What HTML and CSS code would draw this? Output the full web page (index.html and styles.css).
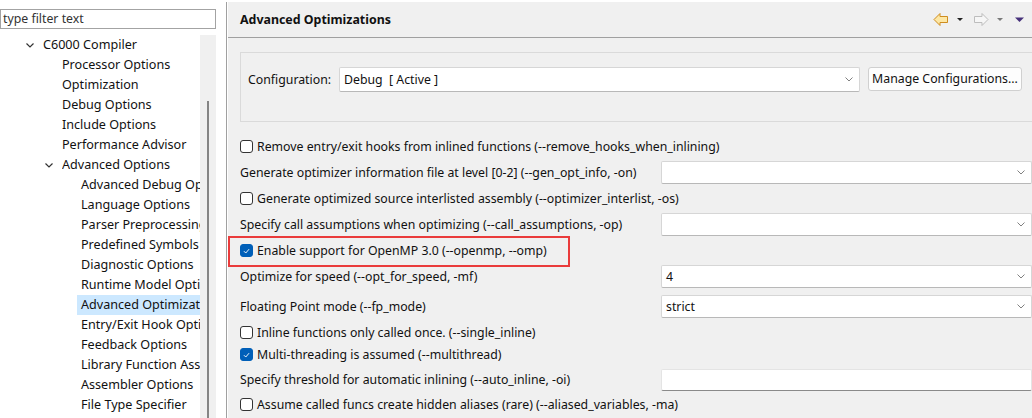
FILE: index.html
```html
<!DOCTYPE html>
<html>
<head>
<meta charset="utf-8">
<link rel="stylesheet" href="styles.css">
</head>
<body>
<div class="app">
  <div class="left">
    <div class="filter">type filter text</div>
    <div class="tree">
      <div class="tree-list">
        <div class="item l1"><svg class="chev" width="10" height="20" viewBox="0 0 10 20"><path d="M1.5 8.5 L5 12 L8.5 8.5" fill="none" stroke="#333" stroke-width="1.2"/></svg><span class="label">C6000 Compiler</span></div>
        <div class="item l2"><span class="label">Processor Options</span></div>
        <div class="item l2"><span class="label">Optimization</span></div>
        <div class="item l2"><span class="label">Debug Options</span></div>
        <div class="item l2"><span class="label">Include Options</span></div>
        <div class="item l2"><span class="label">Performance Advisor</span></div>
        <div class="item l2x"><svg class="chev" width="10" height="20" viewBox="0 0 10 20"><path d="M1.5 8.5 L5 12 L8.5 8.5" fill="none" stroke="#333" stroke-width="1.2"/></svg><span class="label">Advanced Options</span></div>
        <div class="item l3"><span class="label">Advanced Debug Options</span></div>
        <div class="item l3"><span class="label">Language Options</span></div>
        <div class="item l3"><span class="label">Parser Preprocessing Options</span></div>
        <div class="item l3"><span class="label">Predefined Symbols</span></div>
        <div class="item l3"><span class="label">Diagnostic Options</span></div>
        <div class="item l3"><span class="label">Runtime Model Options</span></div>
        <div class="item l3 selected"><span class="label">Advanced Optimizations</span></div>
        <div class="item l3"><span class="label">Entry/Exit Hook Options</span></div>
        <div class="item l3"><span class="label">Feedback Options</span></div>
        <div class="item l3"><span class="label">Library Function Assumptions</span></div>
        <div class="item l3"><span class="label">Assembler Options</span></div>
        <div class="item l3"><span class="label">File Type Specifier</span></div>
      </div>
      <div class="vscroll"><div class="thumb"></div></div>
    </div>
  </div>
  <div class="divider"></div>
  <div class="right">
    <div class="header">
      <div class="title">Advanced Optimizations</div>
      <svg class="nav" width="98" height="35" viewBox="0 0 98 35">
        <polygon points="4,17.5 10,11.5 10,14.5 17.5,14.5 17.5,20.5 10,20.5 10,23.5" fill="#fde7a4" stroke="#cf8d1f" stroke-width="1" stroke-linejoin="round"/>
        <polygon points="27,16 33,16 30,19" fill="#222"/>
        <polygon points="58,17.5 52,11.5 52,14.5 44.5,14.5 44.5,20.5 52,20.5 52,23.5" fill="#f6f6f6" stroke="#bdbdbd" stroke-width="1" stroke-linejoin="round"/>
        <polygon points="67,16 73,16 70,19" fill="#7a7a7a"/>
        <polygon points="85,15.5 94,15.5 89.5,20" fill="#46307a"/>
      </svg>
    </div>
    <div class="content">
      <div class="group">
        <span class="config-label">Configuration:</span>
        <div class="combo config-combo"><span class="combo-text">Debug&nbsp;&nbsp;[ Active ]</span><svg class="combo-chev" width="8" height="5" viewBox="0 0 8 5"><path d="M0.5 0.5 L4 4 L7.5 0.5" fill="none" stroke="#808080" stroke-width="1"/></svg></div>
        <div class="button">Manage Configurations...</div>
      </div>
      <div class="options">
        <div class="row check-row"><span class="cb"></span><span>Remove entry/exit hooks from inlined functions (--remove_hooks_when_inlining)</span></div>
        <div class="row combo-row"><span class="opt-label">Generate optimizer information file at level [0-2] (--gen_opt_info, -on)</span><div class="combo opt-combo"><span class="combo-text"></span><svg class="combo-chev" width="8" height="5" viewBox="0 0 8 5"><path d="M0.5 0.5 L4 4 L7.5 0.5" fill="none" stroke="#808080" stroke-width="1"/></svg></div></div>
        <div class="row check-row"><span class="cb"></span><span>Generate optimized source interlisted assembly (--optimizer_interlist, -os)</span></div>
        <div class="row combo-row"><span class="opt-label">Specify call assumptions when optimizing (--call_assumptions, -op)</span><div class="combo opt-combo"><span class="combo-text"></span><svg class="combo-chev" width="8" height="5" viewBox="0 0 8 5"><path d="M0.5 0.5 L4 4 L7.5 0.5" fill="none" stroke="#808080" stroke-width="1"/></svg></div></div>
        <div class="row check-row highlighted"><span class="cb checked"><svg width="12" height="12" viewBox="0 0 12 12"><path d="M3.2 6.2 L5.2 8.2 L8.8 4" fill="none" stroke="#fff" stroke-width="1"/></svg></span><span>Enable support for OpenMP 3.0 (--openmp, --omp)</span><div class="redbox"></div></div>
        <div class="row combo-row"><span class="opt-label">Optimize for speed (--opt_for_speed, -mf)</span><div class="combo opt-combo"><span class="combo-text">4</span><svg class="combo-chev" width="8" height="5" viewBox="0 0 8 5"><path d="M0.5 0.5 L4 4 L7.5 0.5" fill="none" stroke="#808080" stroke-width="1"/></svg></div></div>
        <div class="row combo-row"><span class="opt-label">Floating Point mode (--fp_mode)</span><div class="combo opt-combo"><span class="combo-text">strict</span><svg class="combo-chev" width="8" height="5" viewBox="0 0 8 5"><path d="M0.5 0.5 L4 4 L7.5 0.5" fill="none" stroke="#808080" stroke-width="1"/></svg></div></div>
        <div class="row check-row"><span class="cb"></span><span>Inline functions only called once. (--single_inline)</span></div>
        <div class="row check-row"><span class="cb checked"><svg width="12" height="12" viewBox="0 0 12 12"><path d="M3.2 6.2 L5.2 8.2 L8.8 4" fill="none" stroke="#fff" stroke-width="1"/></svg></span><span>Multi-threading is assumed (--multithread)</span></div>
        <div class="row input-row"><span class="opt-label">Specify threshold for automatic inlining (--auto_inline, -oi)</span><div class="textbox"></div></div>
        <div class="row check-row"><span class="cb"></span><span>Assume called funcs create hidden aliases (rare) (--aliased_variables, -ma)</span></div>
      </div>
    </div>
  </div>
</div>
</body>
</html>
```

FILE: styles.css
```css
html, body {
  margin: 0;
  padding: 0;
  background: #ffffff;
}
body {
  font-family: "Noto Sans", "Open Sans", sans-serif;
  font-size: 12.3px;
  color: #111;
  width: 1032px;
  height: 418px;
  overflow: hidden;
}
.app {
  display: flex;
  height: 418px;
}
.left {
  width: 226px;
  flex: 0 0 226px;
  background: #fff;
}
.filter {
  margin-top: 9px;
  width: 216px;
  height: 20px;
  box-sizing: border-box;
  border: 1px solid #a3a3a3;
  padding-left: 2px;
  line-height: 18px;
  color: #333;
  white-space: nowrap;
}
.tree {
  display: flex;
  margin-top: 5px;
  height: 384px;
}
.tree-list {
  width: 200px;
  flex: 0 0 200px;
  overflow: hidden;
  padding-top: 1px;
}
.item {
  height: 20px;
  line-height: 20px;
  display: flex;
  align-items: center;
  white-space: nowrap;
  font-size: 12.6px;
}
.item .label {
  display: block;
  flex: 1 1 auto;
  overflow: hidden;
}
.chev {
  flex: 0 0 10px;
  margin-right: 8px;
}
.l1 { padding-left: 25px; }
.l2 { padding-left: 62px; }
.l2x { padding-left: 44px; }
.l3 { padding-left: 77px; }
.l3 .label { padding-left: 4px; }
.selected .label {
  background: #cce8ff;
}
.vscroll {
  width: 16px;
  flex: 0 0 16px;
  margin-top: 1px;
  background: #f0f0f0;
}
.thumb {
  margin-left: 7px;
  margin-top: 66px;
  width: 2px;
  height: 330px;
  background: #858585;
}
.divider {
  width: 1px;
  flex: 0 0 1px;
  margin-top: 2px;
  background: #a0a0a0;
  margin-right: 1px;
}
.right {
  flex: 1 1 auto;
  margin-top: 2px;
  background: #f0f0f0;
  overflow: hidden;
}
.header {
  height: 35px;
  border-bottom: 1px solid #a0a0a0;
  display: flex;
  align-items: center;
  padding-left: 12px;
}
.title {
  font-weight: bold;
  font-size: 12.4px;
  color: #111;
}
.nav {
  margin-left: auto;
  margin-right: 4px;
}
.content {
  padding-left: 12px;
}
.group {
  margin-top: 14px;
  margin-right: -12px;
  height: 70px;
  box-sizing: border-box;
  border: 1px solid #dadada;
  padding: 14px 0 0 7px;
  display: flex;
  align-items: flex-start;
}
.config-label {
  width: 91px;
  flex: 0 0 91px;
  line-height: 25px;
}
.combo {
  box-sizing: border-box;
  background: #fff;
  border: 1px solid #d6d6d6;
  border-bottom-color: #b8b8b8;
  border-radius: 2px;
  display: flex;
  align-items: center;
  padding-left: 4px;
  padding-right: 6px;
}
.combo-text {
  flex: 1 1 auto;
  white-space: nowrap;
}
.combo-chev {
  flex: 0 0 8px;
}
.config-combo {
  width: 521px;
  height: 25px;
}
.button {
  margin-left: 8px;
  width: 154px;
  height: 24px;
  box-sizing: border-box;
  background: #fdfdfd;
  border: 1px solid #d0d0d0;
  border-radius: 3px;
  line-height: 22px;
  text-align: center;
  white-space: nowrap;
}
.options {
  margin-top: 13.7px;
}
.row {
  display: flex;
  align-items: center;
  white-space: nowrap;
}
.check-row { height: 22px; }
.combo-row { height: 30px; }
.input-row { height: 28px; }
.highlighted { position: relative; }
.cb {
  width: 13px;
  height: 13px;
  box-sizing: border-box;
  border: 1px solid #333;
  border-radius: 3px;
  background: #fff;
  margin-right: 4px;
  flex: 0 0 13px;
  display: flex;
  align-items: center;
  justify-content: center;
}
.cb.checked {
  background: #005fb8;
  border-color: #005fb8;
}
.cb svg { display: block; }
.opt-label {
  width: 421px;
  flex: 0 0 421px;
  overflow: hidden;
}
.opt-combo {
  width: 371px;
  height: 23px;
}
.textbox {
  width: 371px;
  height: 22px;
  box-sizing: border-box;
  background: #fff;
  border: 1px solid #e4e4e4;
  border-bottom: 1px solid #8a8a8a;
  border-radius: 2px;
}
.redbox {
  position: absolute;
  left: -12px;
  top: -3.7px;
  width: 342px;
  height: 31px;
  box-sizing: border-box;
  border: 2px solid #ea3b3b;
}
```
